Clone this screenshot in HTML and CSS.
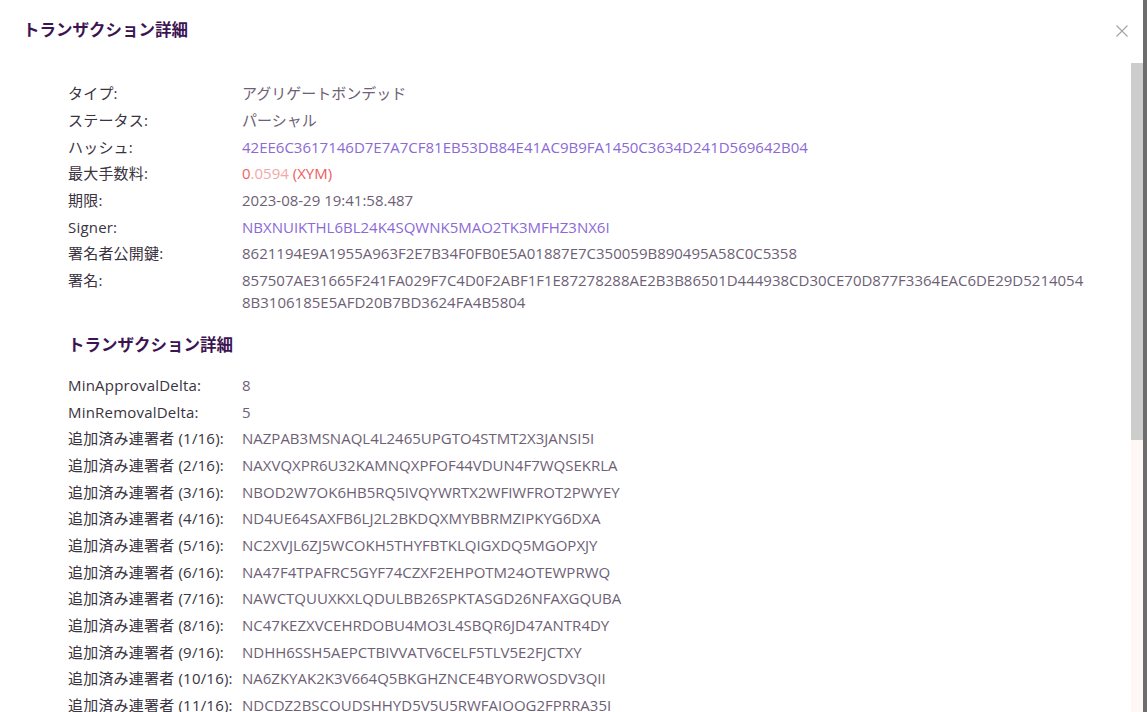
FILE: index.html
```html
<!DOCTYPE html>
<html lang="ja">
<head>
<meta charset="utf-8">
<title>トランザクション詳細</title>
<link rel="stylesheet" href="styles.css">
</head>
<body>
<div class="modal">
  <div class="modal-header">
    <h2 class="modal-title">トランザクション詳細</h2>
    <button class="close-btn" aria-label="close">
      <svg width="12" height="12" viewBox="0 0 12 12"><path d="M0.5 0.5L11.5 11.5M11.5 0.5L0.5 11.5" stroke="#a3a3a3" stroke-width="1.1" fill="none"/></svg>
    </button>
  </div>
  <div class="modal-body">
    <div class="content">
      <div class="table">
        <div class="row"><div class="label">タイプ:</div><div class="value">アグリゲートボンデッド</div></div>
        <div class="row"><div class="label">ステータス:</div><div class="value">パーシャル</div></div>
        <div class="row"><div class="label">ハッシュ:</div><div class="value link">42EE6C3617146D7E7A7CF81EB53DB84E41AC9B9FA1450C3634D241D569642B04</div></div>
        <div class="row"><div class="label">最大手数料:</div><div class="value"><span class="fee-int">0</span><span class="fee-dec">.0594</span> <span class="fee-unit">(XYM)</span></div></div>
        <div class="row"><div class="label">期限:</div><div class="value">2023-08-29 19:41:58.487</div></div>
        <div class="row"><div class="label">Signer:</div><div class="value link">NBXNUIKTHL6BL24K4SQWNK5MAO2TK3MFHZ3NX6I</div></div>
        <div class="row"><div class="label">署名者公開鍵:</div><div class="value">8621194E9A1955A963F2E7B34F0FB0E5A01887E7C350059B890495A58C0C5358</div></div>
        <div class="row"><div class="label">署名:</div><div class="value">857507AE31665F241FA029F7C4D0F2ABF1F1E87278288AE2B3B86501D444938CD30CE70D877F3364EAC6DE29D52140548B3106185E5AFD20B7BD3624FA4B5804</div></div>
      </div>
      <h3 class="section-title">トランザクション詳細</h3>
      <div class="table">
        <div class="row"><div class="label">MinApprovalDelta:</div><div class="value">8</div></div>
        <div class="row"><div class="label">MinRemovalDelta:</div><div class="value">5</div></div>
        <div class="row"><div class="label">追加済み連署者 (1/16):</div><div class="value">NAZPAB3MSNAQL4L2465UPGTO4STMT2X3JANSI5I</div></div>
        <div class="row"><div class="label">追加済み連署者 (2/16):</div><div class="value">NAXVQXPR6U32KAMNQXPFOF44VDUN4F7WQSEKRLA</div></div>
        <div class="row"><div class="label">追加済み連署者 (3/16):</div><div class="value">NBOD2W7OK6HB5RQ5IVQYWRTX2WFIWFROT2PWYEY</div></div>
        <div class="row"><div class="label">追加済み連署者 (4/16):</div><div class="value">ND4UE64SAXFB6LJ2L2BKDQXMYBBRMZIPKYG6DXA</div></div>
        <div class="row"><div class="label">追加済み連署者 (5/16):</div><div class="value">NC2XVJL6ZJ5WCOKH5THYFBTKLQIGXDQ5MGOPXJY</div></div>
        <div class="row"><div class="label">追加済み連署者 (6/16):</div><div class="value">NA47F4TPAFRC5GYF74CZXF2EHPOTM24OTEWPRWQ</div></div>
        <div class="row"><div class="label">追加済み連署者 (7/16):</div><div class="value">NAWCTQUUXKXLQDULBB26SPKTASGD26NFAXGQUBA</div></div>
        <div class="row"><div class="label">追加済み連署者 (8/16):</div><div class="value">NC47KEZXVCEHRDOBU4MO3L4SBQR6JD47ANTR4DY</div></div>
        <div class="row"><div class="label">追加済み連署者 (9/16):</div><div class="value">NDHH6SSH5AEPCTBIVVATV6CELF5TLV5E2FJCTXY</div></div>
        <div class="row"><div class="label">追加済み連署者 (10/16):</div><div class="value">NA6ZKYAK2K3V664Q5BKGHZNCE4BYORWOSDV3QII</div></div>
        <div class="row"><div class="label">追加済み連署者 (11/16):</div><div class="value">NDCDZ2BSCOUDSHHYD5V5U5RWFAIOOG2FPRRA35I</div></div>
      </div>
    </div>
    <div class="scrollbar"><div class="thumb"></div></div>
  </div>
</div>
</body>
</html>
```

FILE: styles.css
```css
html, body {
  margin: 0;
  padding: 0;
  height: 100%;
  overflow: hidden;
}
body {
  background: #6d6d6d;
  font-family: "Open Sans", "Noto Sans CJK JP", sans-serif;
  font-size: 15px;
}
.modal {
  width: 1143px;
  height: 100%;
  background: #ffffff;
  display: flex;
  flex-direction: column;
}
.modal-header {
  height: 63px;
  flex: none;
  display: flex;
  align-items: flex-start;
  justify-content: space-between;
  padding: 18px 15px 0 23px;
  box-sizing: border-box;
}
.modal-title {
  margin: 0;
  font-size: 16.5px;
  line-height: 24px;
  font-weight: 700;
  color: #3c1452;
}
.close-btn {
  border: none;
  background: none;
  padding: 0;
  margin-top: 7px;
  width: 12px;
  height: 12px;
  display: flex;
}
.modal-body {
  flex: 1;
  min-height: 0;
  display: flex;
  overflow: hidden;
}
.content {
  flex: 1;
  min-width: 0;
  padding: 17px 44px 0 68px;
}
.scrollbar {
  width: 12px;
  flex: none;
  background: #fdf8f6;
  display: flex;
  flex-direction: column;
}
.thumb {
  height: 377px;
  background: #cdcdcd;
}
.table {
  display: flex;
  flex-direction: column;
}
.row {
  display: grid;
  grid-template-columns: 174px 1fr;
  line-height: 22px;
  padding: 2.35px 0;
}
.label {
  color: #3a3340;
  letter-spacing: 0.2px;
  white-space: nowrap;
}
.value {
  color: #6e5f76;
  word-break: break-all;
}
.link {
  color: #8c69d4;
}
.fee-int { color: #f06464; }
.fee-dec { color: #f4a8a8; }
.fee-unit { color: #ee5c5c; }
.section-title {
  margin: 17px 0 15px;
  font-size: 16.5px;
  line-height: 24px;
  font-weight: 700;
  color: #3c1452;
}
```
